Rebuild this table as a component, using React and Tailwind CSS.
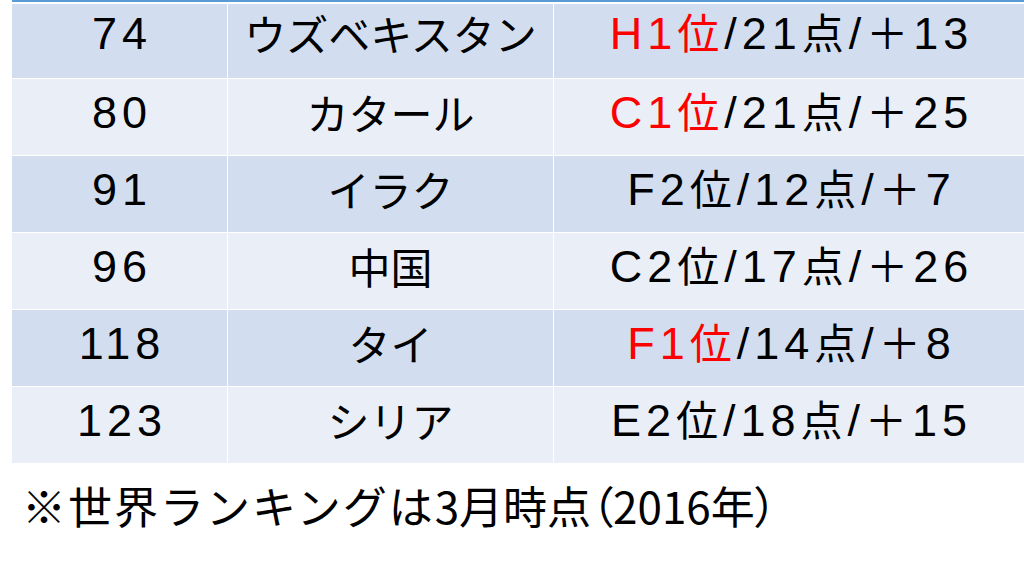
import React from "react";

const rows = [
  { rank: "74", name: "ウズベキスタン", red: "H1位", rest: "/21点/＋13" },
  { rank: "80", name: "カタール", red: "C1位", rest: "/21点/＋25" },
  { rank: "91", name: "イラク", red: null, black: "F2位", rest: "/12点/＋7" },
  { rank: "96", name: "中国", red: null, black: "C2位", rest: "/17点/＋26" },
  { rank: "118", name: "タイ", red: "F1位", rest: "/14点/＋8" },
  { rank: "123", name: "シリア", red: null, black: "E2位", rest: "/18点/＋15" },
];

function Mixed({ text }) {
  const parts = text.match(/[\x20-\x7e]+|[^\x20-\x7e]+/g) || [];
  return parts.map((p, i) =>
    /^[\x20-\x7e]+$/.test(p) ? (
      <span
        key={i}
        className="text-[45px] tracking-[5px]"
        style={{ fontFamily: '"Liberation Sans", Arial, sans-serif' }}
      >
        {p}
      </span>
    ) : (
      <span key={i} className="text-[42px] tracking-[5px]">
        {p}
      </span>
    )
  );
}

export default function App() {
  return (
    <div
      className="w-[1024px] h-[576px] bg-white overflow-hidden text-black"
      style={{ fontFamily: '"Noto Sans CJK JP", "Noto Sans", sans-serif' }}
    >
      <div className="ml-[12px] border-t-[2px] border-[#5b9bd5] pt-[2px] flex flex-col gap-[1px] bg-white">
        {rows.map((r, i) => (
          <div
            key={i}
            className={`grid grid-cols-[215px_325px_1fr] gap-[1px] ${
              i === 0 ? "h-[74px]" : "h-[76px]"
            }`}
          >
            {[0, 1, 2].map((c) => (
              <div
                key={c}
                className={`flex items-center justify-center text-[42px] leading-none ${
                  i % 2 === 0 ? "bg-[#d2deef]" : "bg-[#eaeff7]"
                } ${i === 0 ? "pb-[16px]" : "pb-[10px]"}`}
              >
                {c === 0 && (
                  <span
                    className="text-[45px] tracking-[5px] pl-[5px]"
                    style={{ fontFamily: '"Liberation Sans", Arial, sans-serif' }}
                  >
                    {r.rank}
                  </span>
                )}
                {c === 1 && <span>{r.name}</span>}
                {c === 2 && (
                  <span className="pl-[5px] whitespace-nowrap">
                    {r.red ? (
                      <span className="text-[#ff0000]">
                        <Mixed text={r.red} />
                      </span>
                    ) : (
                      <Mixed text={r.black} />
                    )}
                    <Mixed text={r.rest} />
                  </span>
                )}
              </div>
            ))}
          </div>
        ))}
      </div>
      <div className="pl-[22px] mt-[20px] text-[44px] leading-none whitespace-nowrap">
        <span className="tracking-[2px]">※世界ランキングは</span>
        3月時点
        <span className="[font-feature-settings:'palt']">（</span>
        2016年
        <span className="[font-feature-settings:'palt']">）</span>
      </div>
    </div>
  );
}
